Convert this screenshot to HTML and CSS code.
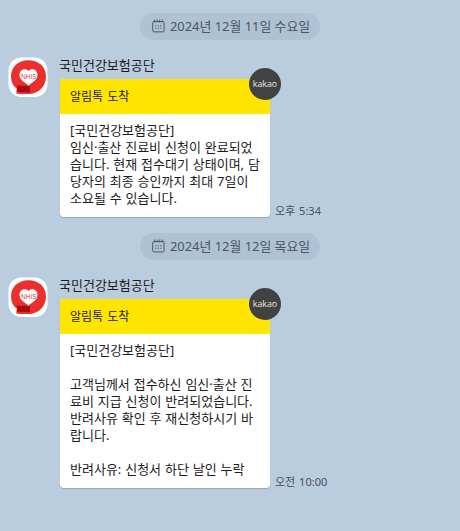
FILE: index.html
```html
<!DOCTYPE html>
<html lang="ko">
<head>
  <meta charset="UTF-8">
  <title>국민건강보험공단</title>
  <link rel="stylesheet" href="styles.css">
</head>
<body>
  <main class="chat">
    <div class="date">
      <svg class="date-icon" viewBox="0 0 13 14">
        <rect x="0.7" y="2.5" width="11.4" height="10.4" rx="1.2" fill="none" stroke="#4c5863"/>
        <path d="M2.5 .5v3M5.1 .5v3M7.7 .5v3M10.3 .5v3" stroke="#4c5863" stroke-width=".9"/>
        <path d="M3.3 6.8h1.2M5.8 6.8H7M8.3 6.8h1.2M3.3 9.3h1.2M5.8 9.3H7M8.3 9.3h1.2" stroke="#4c5863" stroke-width="1.1"/>
      </svg>
      <span>2024년 12월 11일 수요일</span>
    </div>

    <div class="message">
      <svg class="avatar" viewBox="0 0 40 41">
        <rect x=".5" y=".5" width="39" height="39.5" rx="13" fill="#fff"/>
        <path d="M20.5 3.2C31 3.2 38 10 38 19.5S31 37 20.5 37C17 37 12 37.3 8.3 36.5L9 32C5 29 3 24.5 3 19.5C3 10 10 3.2 20.5 3.2z" fill="#e9302f"/>
        <path d="M9.5 28.2c4 1.2 8 .3 12.5.8v6.5c-5-1-9 0-13.5-1z" fill="#ac0d12"/>
        <path d="M20.5 29C19.5 26 11.5 24.5 11.5 18c0-6 6.5-7.5 9-4 2.5-3.5 9-2 9 4C29.5 24.5 21.5 26 20.5 29z" fill="#fff"/>
        <text x="20.5" y="21.5" text-anchor="middle" class="nhis-text">NHIS</text>
      </svg>
      <div class="content">
        <div class="name">국민건강보험공단</div>
        <div class="row">
          <div class="bubble">
            <div class="bubble-title">알림톡 도착</div>
            <span class="badge">kakao</span>
            <p class="bubble-text">[국민건강보험공단]<br>임신·출산 진료비 신청이 완료되었<br>습니다. 현재 접수대기 상태이며, 담<br>당자의 최종 승인까지 최대 7일이<br>소요될 수 있습니다.</p>
          </div>
          <time class="time">오후 5:34</time>
        </div>
      </div>
    </div>

    <div class="date">
      <svg class="date-icon" viewBox="0 0 13 14">
        <rect x="0.7" y="2.5" width="11.4" height="10.4" rx="1.2" fill="none" stroke="#4c5863"/>
        <path d="M2.5 .5v3M5.1 .5v3M7.7 .5v3M10.3 .5v3" stroke="#4c5863" stroke-width=".9"/>
        <path d="M3.3 6.8h1.2M5.8 6.8H7M8.3 6.8h1.2M3.3 9.3h1.2M5.8 9.3H7M8.3 9.3h1.2" stroke="#4c5863" stroke-width="1.1"/>
      </svg>
      <span>2024년 12월 12일 목요일</span>
    </div>

    <div class="message">
      <svg class="avatar" viewBox="0 0 40 41">
        <rect x=".5" y=".5" width="39" height="39.5" rx="13" fill="#fff"/>
        <path d="M20.5 3.2C31 3.2 38 10 38 19.5S31 37 20.5 37C17 37 12 37.3 8.3 36.5L9 32C5 29 3 24.5 3 19.5C3 10 10 3.2 20.5 3.2z" fill="#e9302f"/>
        <path d="M9.5 28.2c4 1.2 8 .3 12.5.8v6.5c-5-1-9 0-13.5-1z" fill="#ac0d12"/>
        <path d="M20.5 29C19.5 26 11.5 24.5 11.5 18c0-6 6.5-7.5 9-4 2.5-3.5 9-2 9 4C29.5 24.5 21.5 26 20.5 29z" fill="#fff"/>
        <text x="20.5" y="21.5" text-anchor="middle" class="nhis-text">NHIS</text>
      </svg>
      <div class="content">
        <div class="name">국민건강보험공단</div>
        <div class="row">
          <div class="bubble">
            <div class="bubble-title">알림톡 도착</div>
            <span class="badge">kakao</span>
            <p class="bubble-text">[국민건강보험공단]<br><br>고객님께서 접수하신 임신·출산 진<br>료비 지급 신청이 반려되었습니다.<br>반려사유 확인 후 재신청하시기 바<br>랍니다.<br><br>반려사유: 신청서 하단 날인 누락</p>
          </div>
          <time class="time">오전 10:00</time>
        </div>
      </div>
    </div>
  </main>
</body>
</html>
```

FILE: styles.css
```css
* {
  box-sizing: border-box;
}

body {
  margin: 0;
  background-color: #bacddf;
  font-family: "Noto Sans", "Noto Sans CJK KR", sans-serif;
  font-size: 13px;
  color: #1c1c1c;
  overflow: hidden;
}

.chat {
  display: flex;
  flex-direction: column;
  height: 531px;
  padding-top: 13px;
}

/* Date divider */
.date {
  display: flex;
  align-items: center;
  align-self: center;
  gap: 5px;
  width: 180px;
  height: 27px;
  padding-left: 12px;
  border-radius: 14px;
  background-color: #afc2d4;
  color: #4a5663;
  font-size: 12.9px;
  line-height: 27px;
  white-space: nowrap;
}

.date-icon {
  width: 13px;
  height: 14px;
  flex: none;
  margin-bottom: 2px;
}

/* Message */
.message {
  display: flex;
  gap: 12px;
  margin: 17px 0 16px;
  padding-left: 8px;
}

.avatar {
  width: 40px;
  height: 41px;
  flex: none;
}

.nhis-text {
  font-family: "Open Sans", sans-serif;
  font-size: 6.5px;
  fill: #c8282c;
}

.name {
  height: 22px;
  margin-left: -1px;
  line-height: 16px;
}

.row {
  display: flex;
  align-items: flex-end;
  gap: 5px;
}

.bubble {
  position: relative;
  width: 210px;
  border-radius: 0 0 4px 4px;
  background-color: #fff;
  box-shadow: 0 1px 1px rgba(70, 90, 110, 0.3);
}

.bubble-title {
  height: 35px;
  padding-left: 10px;
  background-color: #ffe500;
  font-size: 12px;
  line-height: 36px;
  word-spacing: 1px;
}

.bubble-text {
  margin: 0;
  padding: 8px 0 10px 10px;
  line-height: 17px;
  word-spacing: 0.5px;
  white-space: nowrap;
}

.badge {
  position: absolute;
  top: -11px;
  right: -11px;
  width: 32px;
  height: 32px;
  border-radius: 50%;
  background-color: #424242;
  color: #e8e8e8;
  font-family: "Open Sans", sans-serif;
  font-size: 8.8px;
  line-height: 33px;
  text-align: center;
}

.time {
  color: #45515d;
  font-size: 11px;
  line-height: 12px;
  word-spacing: 1px;
}
```
